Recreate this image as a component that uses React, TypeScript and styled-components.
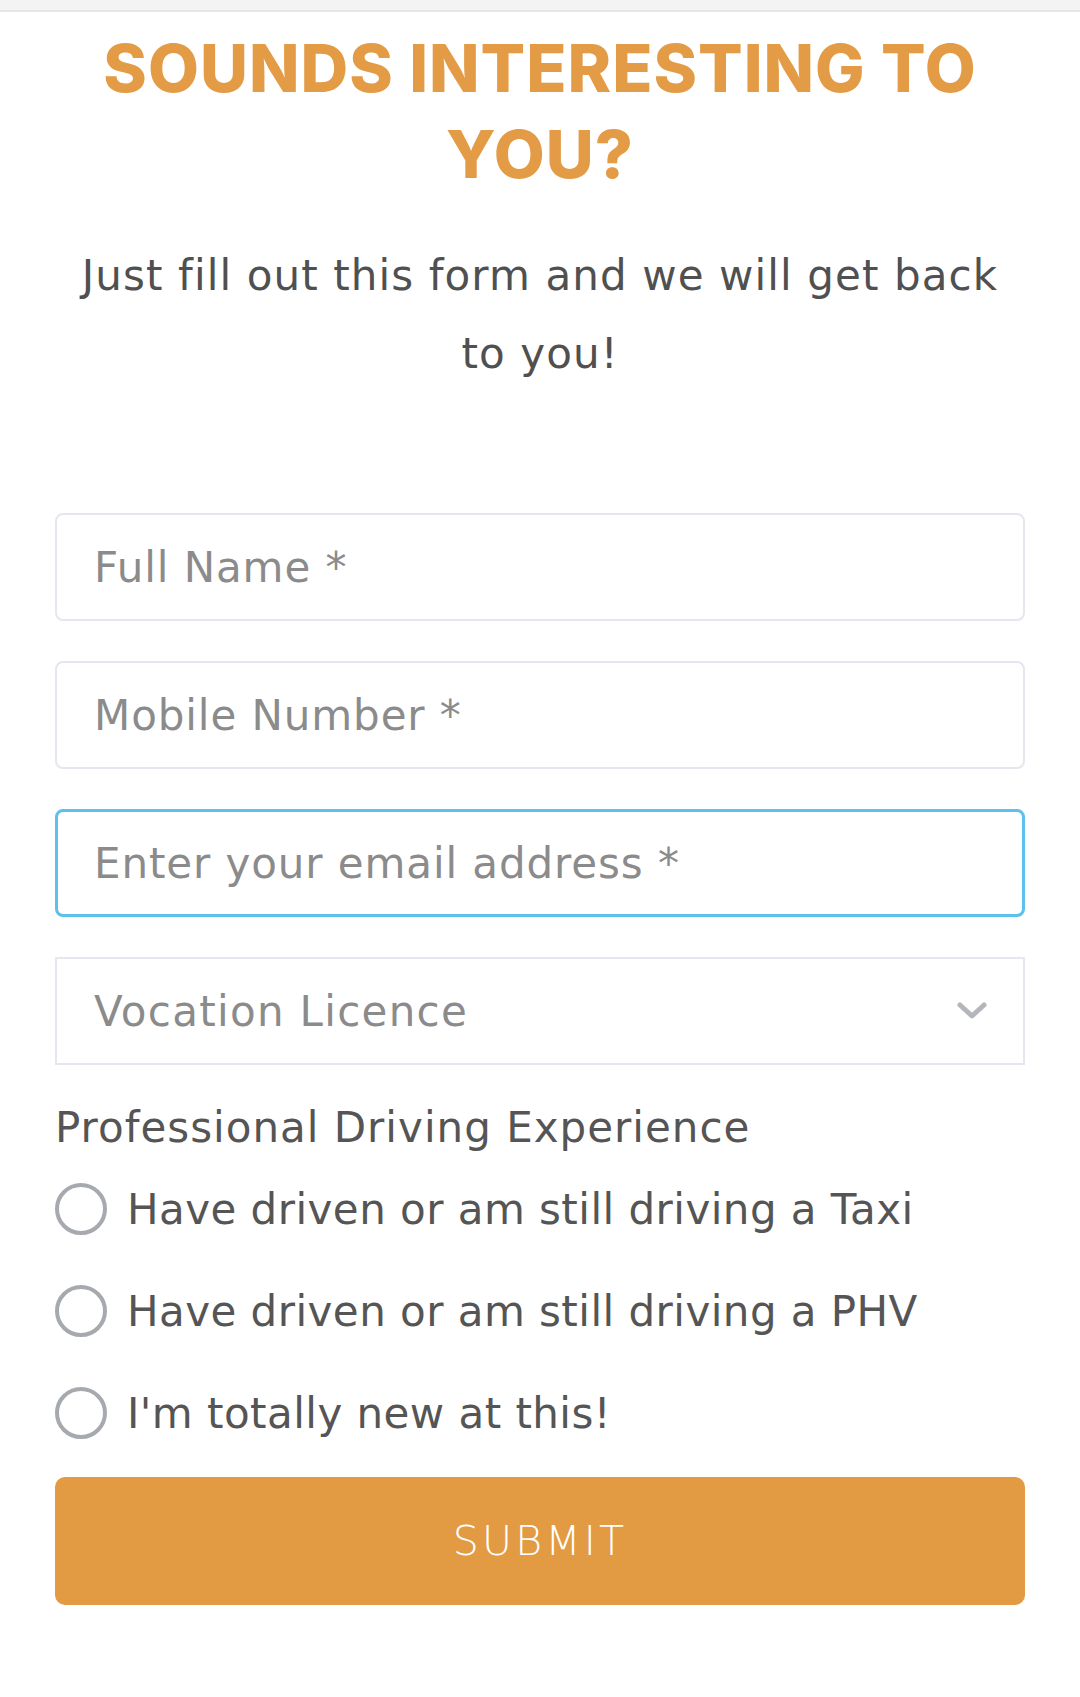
import React from "react";
import styled, { createGlobalStyle } from "styled-components";

const ORANGE = "#e39b45";

const GlobalStyle = createGlobalStyle`
  html, body {
    margin: 0;
    padding: 0;
    background: #ffffff;
    font-family: "DejaVu Sans", "Noto Sans", sans-serif;
  }
  * {
    box-sizing: border-box;
  }
`;

const TopBar = styled.div`
  height: 12px;
  background: #f3f3f3;
  border-bottom: 2px solid #e6e6e6;
`;

const Page = styled.div`
  padding: 0 55px 80px;
`;

const Heading = styled.h1`
  margin: 13px 0 0;
  font-family: "Inter", "Liberation Sans", sans-serif;
  font-weight: 800;
  font-size: 66px;
  letter-spacing: 1px;
  line-height: 86px;
  color: ${ORANGE};
  text-align: center;
  text-transform: uppercase;
`;

const Intro = styled.p`
  margin: 40px -20px 0;
  font-size: 42px;
  letter-spacing: 1.1px;
  line-height: 78px;
  color: #505050;
  text-align: center;
`;

const Form = styled.form`
  margin-top: 120px;
  display: flex;
  flex-direction: column;
`;

const Fields = styled.div`
  display: flex;
  flex-direction: column;
  gap: 40px;
`;

const TextField = styled.input<{ $focused?: boolean }>`
  display: block;
  width: 100%;
  height: 108px;
  padding: 0 ${(p) => (p.$focused ? 36 : 37)}px;
  border: ${(p) => (p.$focused ? "3px solid #5ec0ec" : "2px solid #e4e7ee")};
  border-radius: 8px;
  background: #ffffff;
  font-family: inherit;
  font-size: 42px;
  letter-spacing: 0.9px;
  color: #444444;
  outline: none;
  &::placeholder {
    color: #8b8b8b;
  }
`;

const SelectWrap = styled.div`
  position: relative;
`;

const Select = styled.select`
  display: block;
  width: 100%;
  height: 108px;
  padding: 0 37px;
  border: 2px solid #e4e7ee;
  border-radius: 0;
  background: #ffffff;
  font-family: inherit;
  font-size: 42px;
  letter-spacing: 1.3px;
  color: #8b8b8b;
  appearance: none;
  outline: none;
`;

const Chevron = styled.svg`
  position: absolute;
  right: 38px;
  top: 50%;
  transform: translateY(-50%);
  pointer-events: none;
`;

const Group = styled.fieldset`
  margin: 33px 0 0;
  padding: 0;
  border: none;
`;

const Legend = styled.legend`
  padding: 0;
  font-size: 42px;
  letter-spacing: 1px;
  line-height: 60px;
  color: #555555;
`;

const Option = styled.label`
  display: flex;
  align-items: center;
  gap: 20px;
  height: 102px;
  font-size: 42px;
  letter-spacing: 0.45px;
  color: #555555;
`;

const Radio = styled.input`
  appearance: none;
  margin: 0;
  width: 52px;
  height: 52px;
  border: 4.5px solid #a6aaae;
  border-radius: 50%;
  background: #ffffff;
  flex-shrink: 0;
`;

const SubmitButton = styled.button`
  margin-top: 13px;
  width: 100%;
  height: 128px;
  border: none;
  border-radius: 10px;
  background: #e29a43;
  color: #ffffff;
  font-family: inherit;
  font-size: 41px;
  font-weight: 300;
  letter-spacing: 3.2px;
  text-transform: uppercase;
  cursor: pointer;
`;

const experiences = [
  "Have driven or am still driving a Taxi",
  "Have driven or am still driving a PHV",
  "I'm totally new at this!",
];

const App = () => {
  return (
    <>
      <GlobalStyle />
      <TopBar />
      <Page>
        <Heading>Sounds interesting to you?</Heading>
        <Intro>
          Just fill out this form and we will get back
          <br />
          to you!
        </Intro>
        <Form onSubmit={(e) => e.preventDefault()}>
          <Fields>
            <TextField placeholder="Full Name *" />
            <TextField placeholder="Mobile Number *" />
            <TextField $focused placeholder="Enter your email address *" />
            <SelectWrap>
              <Select defaultValue="">
                <option value="" disabled>
                  Vocation Licence
                </option>
                <option value="yes">Yes</option>
                <option value="no">No</option>
              </Select>
              <Chevron width="30" height="18" viewBox="0 0 30 18">
                <path
                  d="M3 3 L15 14 L27 3"
                  fill="none"
                  stroke="#b3b6bb"
                  strokeWidth="5"
                  strokeLinecap="round"
                  strokeLinejoin="round"
                />
              </Chevron>
            </SelectWrap>
          </Fields>
          <Group>
            <Legend>Professional Driving Experience</Legend>
            {experiences.map((label) => (
              <Option key={label}>
                <Radio type="radio" name="experience" />
                {label}
              </Option>
            ))}
          </Group>
          <SubmitButton type="submit">Submit</SubmitButton>
        </Form>
      </Page>
    </>
  );
};

export default App;
